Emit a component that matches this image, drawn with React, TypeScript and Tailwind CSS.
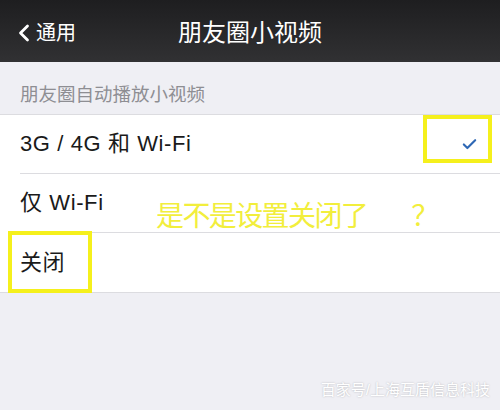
import { Check, ChevronLeft } from 'lucide-react';

const font = { fontFamily: '"Liberation Sans", "Noto Sans CJK SC", "Noto Sans", sans-serif' };

function Row({ label, checked, last }: { label: string; checked?: boolean; last?: boolean }) {
  return (
    <div className="pl-5">
      <div
        className={`h-[59px] flex items-center justify-between pr-[22px] ${last ? '' : 'border-b border-[#dcdce0]'}`}
      >
        <span className="text-[22px] tracking-[0.6px] text-[#1a1a1a] leading-none">{label}</span>
        {checked && <Check className="w-[17px] h-[17px] text-[#2f68b5] mt-[1px]" strokeWidth={3} />}
      </div>
    </div>
  );
}

export default function App() {
  return (
    <div className="relative w-[500px] h-[410px] overflow-hidden bg-[#efeff4]" style={font}>
      {/* nav bar */}
      <div className="h-[62px] bg-gradient-to-b from-[#1e1e20] to-[#313133] flex items-center relative">
        <div className="flex items-center pl-[10px] pt-[4px] text-white">
          <ChevronLeft className="w-[28px] h-[28px]" strokeWidth={2.4} />
          <span className="text-[20px] leading-none -ml-[2px]">通用</span>
        </div>
        <div className="absolute inset-x-0 top-[4px] bottom-0 flex items-center justify-center text-white text-[24px]">
          朋友圈小视频
        </div>
      </div>

      {/* section header */}
      <div className="h-[52px] flex items-end pl-5 pb-[10px] text-[18.5px] text-[#8e8e93] leading-none">
        朋友圈自动播放小视频
      </div>

      {/* list */}
      <div className="bg-white border-y border-[#dcdce0]">
        <Row label="3G / 4G 和 Wi-Fi" checked />
        <Row label="仅 Wi-Fi" />
        <Row label="关闭" last />
      </div>

      {/* annotations */}
      <div className="absolute left-[423px] top-[115px] w-[69px] h-[48px] border-[4px] border-[#f5f01c]" />
      <div className="absolute left-[8px] top-[231px] w-[84px] h-[62px] border-[4px] border-[#f5f01c]" />
      <div className="absolute left-[156px] top-[203px] flex items-baseline text-[28px] leading-none text-[#f2ee3c]">
        <span className="tracking-[-1.6px]">是不是设置关闭了</span>
        <span className="ml-[44px]">？</span>
      </div>

      {/* watermark */}
      <div className="absolute right-[10px] bottom-[13px] text-[15px] leading-none text-white [text-shadow:0_0_2px_rgba(0,0,0,0.25)]">
        百家号/上海互盾信息科技
      </div>
    </div>
  );
}
